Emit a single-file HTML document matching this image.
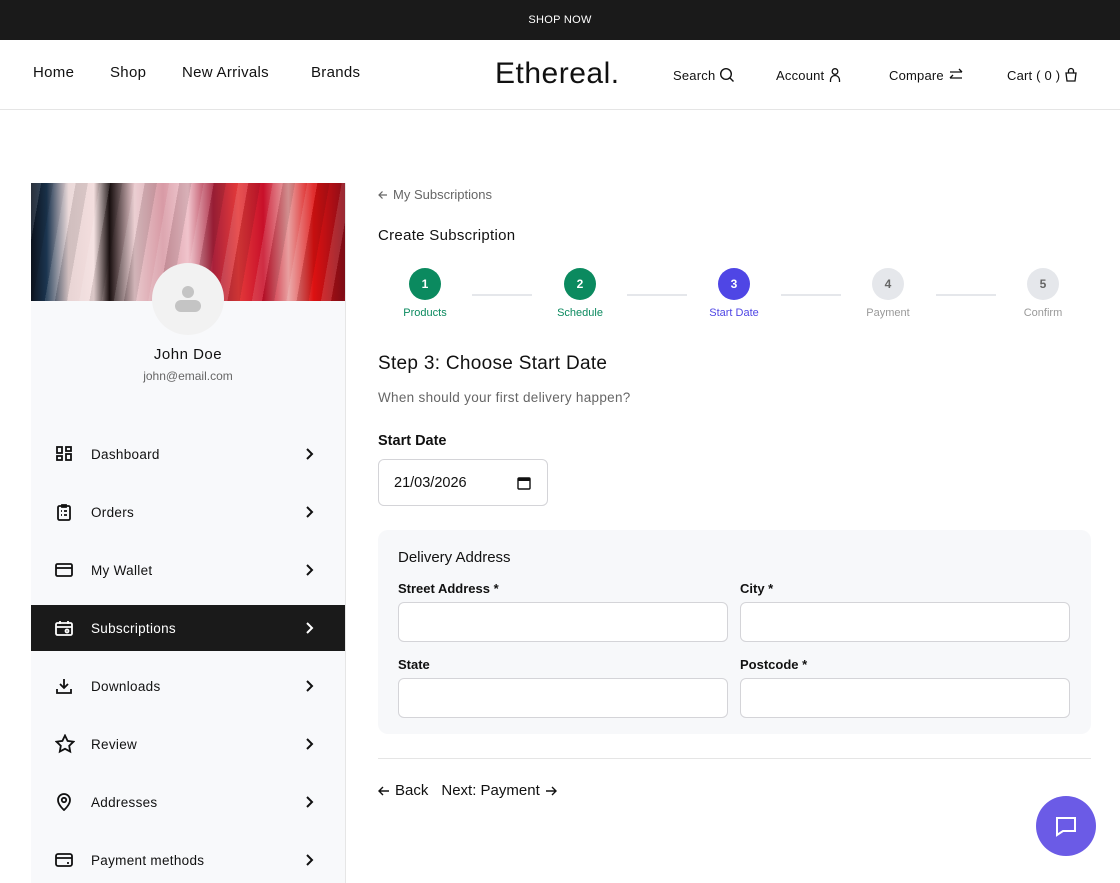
<!DOCTYPE html>
<html><head><meta charset="utf-8"><style>
*{box-sizing:border-box;margin:0;padding:0}
body{width:1120px;height:880px;overflow:hidden;background:#fff;font-family:"Liberation Sans",sans-serif;color:#111;position:relative}
.top{height:40px;background:#1a1a1a;color:#fff;font-size:11px;text-align:center;line-height:40px;letter-spacing:.3px}
.hdr{height:70px;border-bottom:1px solid #e5e5e5;position:relative}
.nl{position:absolute;top:24px;font-size:15px;letter-spacing:.3px}
.logo{position:absolute;left:495px;top:17px;font-size:30px;letter-spacing:.5px}
.r{position:absolute;top:27px;font-size:13px;display:flex;align-items:center;gap:4px;letter-spacing:.2px}
.side{position:absolute;left:31px;top:183px;width:315px;height:700px;background:#f8f9fb;border-right:1px solid #e6e6e6}
.ban{height:118px;background:linear-gradient(90deg,#0d1420 0%,#1b3550 5%,#e8d4d4 12%,#f3dede 20%,#1a1010 25%,#e8c8cc 33%,#d89aa5 42%,#f0c4cc 50%,#a8203a 58%,#e43a3a 66%,#c8102a 74%,#e8a0a0 82%,#d11 90%,#8a0d18 100%);position:relative;overflow:hidden}
.ban:after{content:"";position:absolute;inset:0;background:repeating-linear-gradient(100deg,rgba(255,255,255,.12) 0 10px,rgba(0,0,0,.1) 10px 22px,transparent 22px 34px)}
.av{position:absolute;left:121px;top:80px;width:72px;height:72px;border-radius:50%;background:#f2f2f2;z-index:2}
.name{position:absolute;top:163px;width:100%;text-align:center;font-size:15px;letter-spacing:.5px}
.mail{position:absolute;top:186px;width:100%;text-align:center;font-size:12px;color:#666}
.mi{position:absolute;left:0;width:314px;height:46px;display:flex;align-items:center;font-size:13.5px;letter-spacing:.3px}
.mi svg.i{position:absolute;left:24px}
.mi .t{position:absolute;left:60px}
.mi svg.c{position:absolute;left:273px}
.mi.a{background:#1a1a1a;color:#fff}
.abs{position:absolute}
.step{position:absolute;top:268px;width:32px;height:32px;border-radius:50%;color:#fff;font-size:12px;font-weight:bold;text-align:center;line-height:32px}
.sl{position:absolute;top:307px;font-size:11px;text-align:center;width:80px}
.ln{position:absolute;top:294px;height:2px;background:#e5e7eb;width:60px}
.box{position:absolute;left:378px;top:530px;width:713px;height:204px;background:#f7f8fa;border-radius:10px}
.lab{position:absolute;font-size:13px;font-weight:bold}
.in{position:absolute;width:330px;height:40px;background:#fff;border:1px solid #d4d4d8;border-radius:6px}
</style></head><body>
<div class="top">SHOP NOW</div>
<div class="hdr">
<div class="nl" style="left:33px">Home</div>
<div class="nl" style="left:110px">Shop</div>
<div class="nl" style="left:182px">New Arrivals</div>
<div class="nl" style="left:311px">Brands</div>
<div class="logo">Ethereal.</div>
<div class="r" style="left:673px">Search <svg width="16" height="16" viewBox="0 0 16 16" fill="none" stroke="#111" stroke-width="1.4"><circle cx="7" cy="7" r="5.3"/><path d="M11 11l3.5 3.5"/></svg></div>
<div class="r" style="left:776px">Account <svg width="14" height="16" viewBox="0 0 14 16" fill="none" stroke="#111" stroke-width="1.3"><circle cx="7" cy="4.5" r="2.8"/><path d="M2.5 15v-2a4.5 4.5 0 0 1 9 0v2"/></svg></div>
<div class="r" style="left:889px">Compare <svg width="16" height="16" viewBox="0 0 16 16" fill="none" stroke="#111" stroke-width="1.3"><path d="M2 5h12M11 2l3 3M14 11H2M5 8l-3 3"/></svg></div>
<div class="r" style="left:1007px">Cart ( 0 ) <svg width="14" height="16" viewBox="0 0 14 16" fill="none" stroke="#111" stroke-width="1.3"><path d="M2 6h10l-1 8H3z"/><path d="M4.5 6V4a2.5 2.5 0 0 1 5 0v2"/></svg></div>
</div>

<div class="side">
<div class="ban"></div>
<div class="av"><svg width="72" height="72" viewBox="0 0 72 72"><circle cx="36" cy="29" r="6" fill="#c4c4c4"/><rect x="23" y="37" width="26" height="12" rx="6" fill="#c4c4c4"/></svg></div>
<div class="name">John Doe</div>
<div class="mail">john@email.com</div>
<div class="mi" style="top:248px"><svg class="i" width="18" height="18" viewBox="0 0 18 18" fill="none" stroke="#111" stroke-width="1.8"><rect x="2" y="2" width="5" height="6"/><rect x="2" y="11" width="5" height="4"/><rect x="11" y="2" width="5" height="4"/><rect x="11" y="9" width="5" height="6"/></svg><span class="t">Dashboard</span><svg class="c" width="12" height="14" viewBox="0 0 12 14" fill="none" stroke="#111" stroke-width="2"><path d="M3 2l5 5-5 5"/></svg></div>
<div class="mi" style="top:306px"><svg class="i" width="18" height="18" viewBox="0 0 18 18" fill="none" stroke="#111" stroke-width="1.8"><rect x="3" y="3" width="12" height="14" rx="1.5"/><path d="M7 2h4v2H7zM6 8h1M9 8h3M6 12h1M9 12h3"/></svg><span class="t">Orders</span><svg class="c" width="12" height="14" viewBox="0 0 12 14" fill="none" stroke="#111" stroke-width="2"><path d="M3 2l5 5-5 5"/></svg></div>
<div class="mi" style="top:364px"><svg class="i" width="18" height="18" viewBox="0 0 18 18" fill="none" stroke="#111" stroke-width="1.8"><rect x="1" y="3" width="16" height="12" rx="1.5"/><path d="M1 7h16"/></svg><span class="t">My Wallet</span><svg class="c" width="12" height="14" viewBox="0 0 12 14" fill="none" stroke="#111" stroke-width="2"><path d="M3 2l5 5-5 5"/></svg></div>
<div class="mi a" style="top:422px"><svg class="i" width="18" height="18" viewBox="0 0 18 18" fill="none" stroke="#fff" stroke-width="1.8"><rect x="1" y="4" width="16" height="12" rx="1.5"/><path d="M1 8h16M5 2v3M13 2v3"/><circle cx="12" cy="12" r="1.5"/></svg><span class="t">Subscriptions</span><svg class="c" width="12" height="14" viewBox="0 0 12 14" fill="none" stroke="#fff" stroke-width="2"><path d="M3 2l5 5-5 5"/></svg></div>
<div class="mi" style="top:480px"><svg class="i" width="18" height="18" viewBox="0 0 18 18" fill="none" stroke="#111" stroke-width="1.8"><path d="M9 2v9M5 7l4 4 4-4M2 12v4h14v-4"/></svg><span class="t">Downloads</span><svg class="c" width="12" height="14" viewBox="0 0 12 14" fill="none" stroke="#111" stroke-width="2"><path d="M3 2l5 5-5 5"/></svg></div>
<div class="mi" style="top:538px"><svg class="i" width="20" height="20" viewBox="0 0 20 20" fill="none" stroke="#111" stroke-width="1.8"><path d="M10 1.5l2.6 5.4 5.9.8-4.3 4.1 1 5.8L10 14.8l-5.2 2.8 1-5.8L1.5 7.7l5.9-.8z"/></svg><span class="t">Review</span><svg class="c" width="12" height="14" viewBox="0 0 12 14" fill="none" stroke="#111" stroke-width="2"><path d="M3 2l5 5-5 5"/></svg></div>
<div class="mi" style="top:596px"><svg class="i" width="18" height="18" viewBox="0 0 18 18" fill="none" stroke="#111" stroke-width="1.8"><path d="M9 17s-6-5-6-10a6 6 0 0 1 12 0c0 5-6 10-6 10z"/><circle cx="9" cy="7" r="2.2"/></svg><span class="t">Addresses</span><svg class="c" width="12" height="14" viewBox="0 0 12 14" fill="none" stroke="#111" stroke-width="2"><path d="M3 2l5 5-5 5"/></svg></div>
<div class="mi" style="top:654px"><svg class="i" width="18" height="18" viewBox="0 0 18 18" fill="none" stroke="#111" stroke-width="1.8"><rect x="1" y="3" width="16" height="12" rx="2"/><path d="M1 7h16M12 12h2"/></svg><span class="t">Payment methods</span><svg class="c" width="12" height="14" viewBox="0 0 12 14" fill="none" stroke="#111" stroke-width="2"><path d="M3 2l5 5-5 5"/></svg></div>
</div>

<div class="abs" style="left:378px;top:187px;font-size:13px;color:#666;display:flex;align-items:center;gap:5px"><svg width="10" height="10" viewBox="0 0 10 10" fill="none" stroke="#666" stroke-width="1.2"><path d="M9 5H1M4.5 1.5L1 5l3.5 3.5"/></svg>My Subscriptions</div>
<div class="abs" style="left:378px;top:227px;font-size:15px;letter-spacing:.3px">Create Subscription</div>
<div class="step" style="left:409px;background:#0b8a5f">1</div>
<div class="step" style="left:564px;background:#0b8a5f">2</div>
<div class="step" style="left:718px;background:#4f46e5">3</div>
<div class="step" style="left:872px;background:#e5e7eb;color:#666">4</div>
<div class="step" style="left:1027px;background:#e5e7eb;color:#666">5</div>
<div class="ln" style="left:472px"></div><div class="ln" style="left:627px"></div><div class="ln" style="left:781px"></div><div class="ln" style="left:936px"></div>
<div class="sl" style="left:385px;color:#0b8a5f">Products</div>
<div class="sl" style="left:540px;color:#0b8a5f">Schedule</div>
<div class="sl" style="left:694px;color:#4f46e5">Start Date</div>
<div class="sl" style="left:848px;color:#999">Payment</div>
<div class="sl" style="left:1003px;color:#999">Confirm</div>
<div class="abs" style="left:378px;top:353px;font-size:19px;letter-spacing:.3px">Step 3: Choose Start Date</div>
<div class="abs" style="left:378px;top:390px;font-size:13.5px;color:#666;letter-spacing:.3px">When should your first delivery happen?</div>
<div class="abs" style="left:378px;top:433px;font-size:14.5px;font-weight:bold">Start Date</div>
<div class="abs" style="left:378px;top:459px;width:170px;height:47px;border:1px solid #d4d4d8;border-radius:6px;font-size:14.5px;padding:15px 0 0 15px">21/03/2026<svg style="position:absolute;left:138px;top:16px" width="14" height="14" viewBox="0 0 14 14"><rect x="1" y="2" width="12" height="11" rx="1" fill="none" stroke="#111" stroke-width="1.4"/><rect x="1" y="2" width="12" height="3" fill="#111"/></svg></div>
<div class="box"></div>
<div class="abs" style="left:398px;top:549px;font-size:15px">Delivery Address</div>
<div class="lab" style="left:398px;top:581px">Street Address *</div>
<div class="lab" style="left:740px;top:581px">City *</div>
<div class="in" style="left:398px;top:602px"></div><div class="in" style="left:740px;top:602px"></div>
<div class="lab" style="left:398px;top:657px">State</div>
<div class="lab" style="left:740px;top:657px">Postcode *</div>
<div class="in" style="left:398px;top:678px"></div><div class="in" style="left:740px;top:678px"></div>
<div class="abs" style="left:378px;top:758px;width:713px;height:1px;background:#e5e5e5"></div>
<div class="abs" style="left:378px;top:782px;font-size:15px;display:flex;align-items:center;gap:5px"><svg width="12" height="12" viewBox="0 0 12 12" fill="none" stroke="#111" stroke-width="1.4"><path d="M11 6H1M5 2L1 6l4 4"/></svg>Back<span style="margin-left:8px">Next: Payment</span><svg width="12" height="12" viewBox="0 0 12 12" fill="none" stroke="#111" stroke-width="1.4"><path d="M1 6h10M7 2l4 4-4 4"/></svg></div>
<div class="abs" style="left:1036px;top:796px;width:60px;height:60px;border-radius:50%;background:#6b5be6"><svg style="position:absolute;left:17px;top:17px" width="26" height="26" viewBox="0 0 26 26" fill="none" stroke="#fff" stroke-width="2"><path d="M4 5h18v13H10l-6 4z"/></svg></div>
</body></html>
